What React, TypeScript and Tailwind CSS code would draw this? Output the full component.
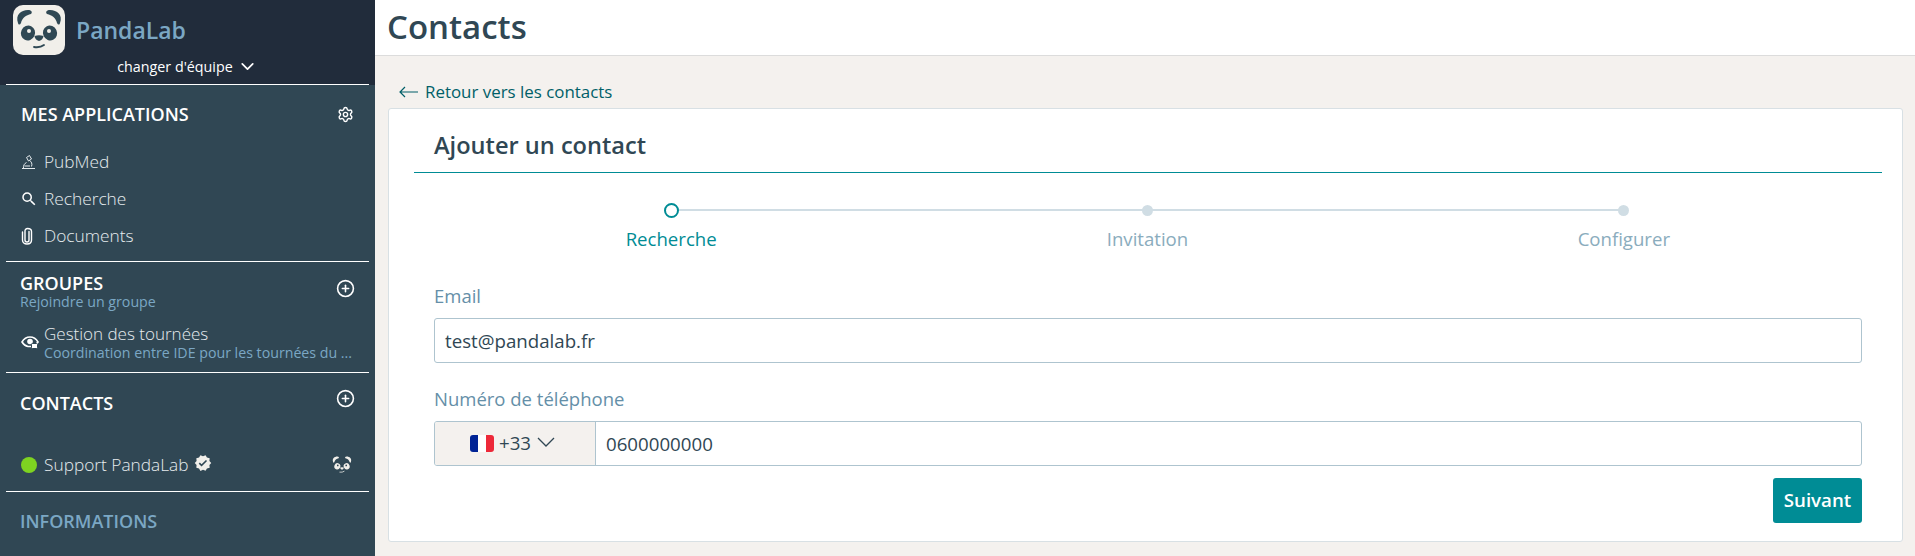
import React from "react";
import { ChevronDown, Settings, CirclePlus } from "lucide-react";
import { MdSearch, MdVerified } from "react-icons/md";

const font = { fontFamily: '"Open Sans", "Noto Sans", sans-serif' };

function Panda({ size = 52, bg = true, fg = "#2f4854" }: { size?: number; bg?: boolean; fg?: string }) {
  const eye = bg ? "#f1efea" : "#304754";
  return (
    <svg width={size} height={size} viewBox="0 0 52 50" className="shrink-0">
      {bg && <rect x="0" y="0" width="52" height="50" rx="10" fill="#f1efea" />}
      <path d="M5 18 C2 10 8 5 15 5 C18 5 20 7 18 9 C13 10 9 13 8 18 C7 20 5.500 20 5 18Z" fill={fg} />
      <path d="M47 18 C50 10 44 5 37 5 C34 5 32 7 34 9 C39 10 43 13 44 18 C45 20 46.500 20 47 18Z" fill={fg} />
      <ellipse cx="15" cy="28" rx="7" ry="7.500" transform="rotate(25 15 28)" fill={fg} />
      <ellipse cx="37" cy="28" rx="7" ry="7.500" transform="rotate(-25 37 28)" fill={fg} />
      <circle cx="16" cy="26" r="2" fill={eye} />
      <circle cx="36" cy="26" r="2" fill={eye} />
      <path d="M21.500 31 Q26 29.500 30.500 31 Q30 35 26 36 Q22 35 21.500 31Z" fill={fg} />
      <path d="M21 42 Q27 43 31 40" stroke={fg} strokeWidth="1.800" fill="none" strokeLinecap="round" />
    </svg>
  );
}

function Divider() {
  return <div className="mx-[6px] h-px bg-white" />;
}

function Microscope() {
  return (
    <svg width="15" height="16" viewBox="0 0 15 16" fill="none" stroke="#e6ecef" strokeWidth="1">
      <path d="M1 14.500 H14 M2.500 14.500 C2 11.500 3.500 9.500 5.500 8.500 M5.500 3.500 L8.500 1.500 L10.500 5 L7.500 7 Z M8.500 6.500 C10.500 7.500 11.500 10 10.500 12.500 M3.500 12 H9" />
    </svg>
  );
}

function Clip() {
  return (
    <svg width="12" height="18" viewBox="0 0 12 18" fill="none" stroke="#fff" strokeWidth="1.400" strokeLinecap="round">
      <path d="M8 4.500 V13 C8 14.200 7.200 15 6 15 C4.800 15 4 14.200 4 13 V4 C4 2.500 5 1.500 6.500 1.500 C8.500 1.500 10.500 2.500 10.500 4.500 V13 C10.500 15.500 8.500 17 6 17 C3.500 17 1.500 15.500 1.500 13 V5" />
    </svg>
  );
}

function EyeLock() {
  return (
    <svg width="18" height="16" viewBox="0 0 18 16" fill="none">
      <path d="M1 8 C3 4.500 6 3 9 3 C12 3 15 4.500 17 8 C15.500 10.500 13.500 12 11 12.500 L7 12.500 C4.500 12 2.500 10.500 1 8Z" stroke="#fff" strokeWidth="1.600" />
      <circle cx="9" cy="7.500" r="2.800" fill="#fff" />
      <rect x="10.500" y="9.500" width="6" height="5" rx="1" fill="#fff" stroke="#304754" strokeWidth="1" />
    </svg>
  );
}

function NavItem({ icon, label }: { icon: React.ReactNode; label: string }) {
  return (
    <div className="flex h-[37px] items-center pl-[21px] text-[17.300px] text-[#e6ecef]">
      <span className="flex w-[23px] items-center">{icon}</span>
      <span className="font-light">{label}</span>
    </div>
  );
}

function Step({ label, active }: { label: string; active?: boolean }) {
  return (
    <div className="flex flex-1 flex-col items-center">
      <div className="flex h-[16px] items-center justify-center">
        {active ? (
          <div className="h-[15px] w-[15px] rounded-full border-2 border-[#008c95] bg-white" />
        ) : (
          <div className="h-[11px] w-[11px] rounded-full bg-[#d0dde4]" />
        )}
      </div>
      <span className={`mt-[9px] text-[18.600px] leading-[24px] ${active ? "text-[#008c95]" : "text-[#8aacbd]"}`}>{label}</span>
    </div>
  );
}

export default function App() {
  return (
    <div style={font} className="flex h-[556px] w-[1915px] overflow-hidden bg-[#f4f1ee]">
      <aside className="flex h-full w-[375px] shrink-0 flex-col bg-[#304754]">
        <div className="h-[85px] shrink-0 bg-[#212c3b]">
          <div className="flex h-[54px] items-start pl-[13px] pt-[4px]">
            <Panda />
            <span className="ml-[11px] mt-[10px] text-[23px] leading-[32px] font-semibold text-[#7ba7c4]">PandaLab</span>
          </div>
          <div className="flex h-[25px] items-center justify-center gap-[4px] text-[14.300px] text-white">
            <span>changer d'équipe</span>
            <ChevronDown size={21} strokeWidth={2} />
          </div>
          <div className="mt-[5px]"><Divider /></div>
        </div>
        <div className="flex h-[58px] items-center justify-between pl-[21px] pr-[21px]">
          <span className="text-[18px] font-semibold text-white">MES APPLICATIONS</span>
          <Settings size={17} color="#fff" />
        </div>
        <div className="pb-[7px]">
          <NavItem icon={<Microscope />} label="PubMed" />
          <NavItem icon={<MdSearch size={18} color="#fff" className="-ml-[1px]" />} label="Recherche" />
          <NavItem icon={<Clip />} label="Documents" />
        </div>
        <Divider />
        <div className="flex items-center justify-between pl-[20px] pr-[20px] pt-[10px]">
          <div className="flex flex-col">
            <span className="text-[18px] leading-[22px] font-semibold text-white">GROUPES</span>
            <span className="text-[14.200px] leading-[16px] text-[#7ba7c4]">Rejoindre un groupe</span>
          </div>
          <CirclePlus size={19} color="#fff" className="mb-[6px]" />
        </div>
        <div className="flex items-center pl-[21px] pt-[13px] pb-[11px]">
          <span className="w-[23px]"><EyeLock /></span>
          <div className="flex min-w-0 flex-col">
            <span className="text-[17px] leading-[21px] font-light text-[#e6ecef]">Gestion des tournées</span>
            <span className="text-[14.200px] leading-[17px] whitespace-nowrap text-[#7ba7c4]">Coordination entre IDE pour les tournées du ...</span>
          </div>
        </div>
        <Divider />
        <div className="flex h-[60px] items-start justify-between px-[20px] pt-[18px]">
          <span className="text-[18px] leading-[24px] font-semibold text-white">CONTACTS</span>
          <CirclePlus size={19} color="#fff" className="-mt-[2px]" />
        </div>
        <div className="flex h-[58px] items-center justify-between pl-[21px] pr-[22px] pt-[5px]">
          <div className="flex items-center">
            <span className="h-[16px] w-[16px] rounded-full bg-[#7ed321]" />
            <span className="ml-[7px] text-[17.300px] font-light text-[#e6ecef]">Support PandaLab</span>
            <MdVerified size={18} color="#f1efea" className="ml-[5px] -mt-[4px]" />
          </div>
          <Panda size={22} bg={false} fg="#f1efea" />
        </div>
        <Divider />
        <div className="pl-[20px] pt-[17px] text-[18px] leading-[24px] font-semibold text-[#7ba7c4]">INFORMATIONS</div>
      </aside>

      <main className="flex min-w-0 flex-1 flex-col">
        <header className="flex h-[56px] shrink-0 items-center border-b border-[#dcdcdc] bg-white pl-[12px]">
          <h1 className="-mt-[2px] text-[33px] font-semibold text-[#304754]">Contacts</h1>
        </header>
        <a className="ml-[24px] mt-[25px] flex h-[22px] items-center gap-[7px] text-[16.900px] font-medium text-[#005f68]">
          <svg width="19" height="12" viewBox="0 0 19 12" fill="none" stroke="#005f68" strokeWidth="1.200">
            <path d="M19 6 H1 M6 1 L1 6 L6 11" />
          </svg>
          Retour vers les contacts
        </a>
        <section className="ml-[13px] mr-[12px] mt-[5px] flex h-[434px] flex-col rounded-[3px] border border-[#d8e0e4] bg-white">
          <div className="ml-[25px] mr-[20px] flex h-[64px] items-center border-b border-[#008c95] pl-[20px] pt-[10px]">
            <h2 className="text-[23.600px] font-semibold text-[#304754]">Ajouter un contact</h2>
          </div>
          <div className="relative ml-[44px] mr-[40px] mt-[29px]">
            <div className="absolute left-[238px] right-[238px] top-[7px] h-[2px] bg-[#d0dde4]" />
            <div className="relative flex">
              <Step label="Recherche" active />
              <Step label="Invitation" />
              <Step label="Configurer" />
            </div>
          </div>
          <div className="ml-[45px] mr-[40px] mt-[33px] flex flex-col">
            <label className="text-[18.500px] leading-[24px] text-[#658fa8]">Email</label>
            <div className="mt-[10px] flex h-[45px] items-center rounded-[3px] border border-[#aec4cf] pl-[10px] pt-[2px] text-[18.700px] text-[#304754]">test@pandalab.fr</div>
            <label className="mt-[24px] text-[18.500px] leading-[24px] text-[#658fa8]">Numéro de téléphone</label>
            <div className="mt-[10px] flex h-[45px] overflow-hidden rounded-[3px] border border-[#aec4cf] text-[18.700px] text-[#304754]">
              <div className="flex w-[161px] items-center justify-center gap-[5px] border-r border-[#aec4cf] bg-[#f4f1ee] pr-[5px]">
                <span className="flex h-[17px] w-[24px] overflow-hidden rounded-[3px]">
                  <span className="flex-1 bg-[#002395]" />
                  <span className="flex-1 bg-white" />
                  <span className="flex-1 bg-[#ed2939]" />
                </span>
                <span>+33</span>
                <svg width="18" height="10" viewBox="0 0 18 10" fill="none" stroke="#304754" strokeWidth="1.300" className="-mt-[3px] ml-[1px]">
                  <path d="M1 1 L9 9 L17 1" />
                </svg>
              </div>
              <div className="flex flex-1 items-center pl-[10px] pt-[1px]">0600000000</div>
            </div>
            <div className="mt-[12px] flex justify-end">
              <button className="h-[45px] w-[89px] rounded-[3px] bg-[#008c95] text-[18.700px] font-semibold text-white">Suivant</button>
            </div>
          </div>
        </section>
      </main>
    </div>
  );
}
